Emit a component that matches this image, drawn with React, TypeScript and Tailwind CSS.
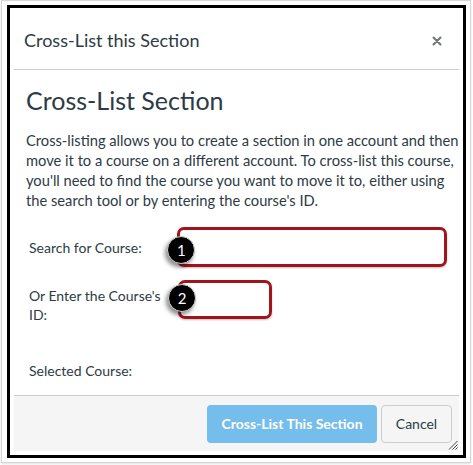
const Badge = ({ n, className }: { n: string; className: string }) => (
  <div
    className={`absolute flex h-[28px] w-[28px] items-center justify-center rounded-full border border-[#d0d0d0] bg-black text-[15px] text-white shadow-[-2px_3px_4px_rgba(0,0,0,0.45)] ${className}`}
  >
    {n}
  </div>
);

const App = () => {
  return (
    <div className="h-[465px] w-[473px] bg-white font-['Lato',sans-serif] text-[#2d3b45]">
      <div className="ml-[1px] h-[463px] w-[470px] border border-[#d6d6d6] pl-[5px] pt-[4px] shadow-[0_1px_2px_rgba(0,0,0,0.12)]">
        <div className="h-[453px] w-[459px] border-[3px] border-black p-[4px]">
          <div className="relative flex h-full flex-col bg-white">
            {/* header */}
            <div className="flex h-[58px] shrink-0 items-center justify-between border-b border-[#c7cdd1] pl-[10px] pr-[17px]">
              <span className="text-[18px]">Cross-List this Section</span>
              <svg width="10" height="10" viewBox="0 0 10 10" className="mt-[1px]">
                <path d="M1.5 1.5 L8.5 8.5 M8.5 1.5 L1.5 8.5" stroke="#6f7478" strokeWidth="2" strokeLinecap="round" />
              </svg>
            </div>

            {/* body */}
            <div className="flex-1 px-[12px] pt-[14px]">
              <h2 className="text-[25px] leading-[32px]">Cross-List Section</h2>
              <p className="mt-[14px] whitespace-nowrap text-[14.7px] leading-[20px]">
                Cross-listing allows you to create a section in one account and then
                <br />
                move it to a course on a different account. To cross-list this course,
                <br />
                you'll need to find the course you want to move it to, either using
                <br />
                the search tool or by entering the course's ID.
              </p>

              <div className="mt-[17px] flex items-center pl-[3px]">
                <div className="w-[149px] text-[14px]">Search for Course:</div>
                <div className="relative h-[40px] w-[271px] rounded-[7px] border-[3px] border-[#a0141a] shadow-[0_1px_2px_rgba(0,0,0,0.25)]">
                  <Badge n="1" className="left-[-13px] top-[6px]" />
                </div>
              </div>

              <div className="mt-[13px] flex items-start pl-[3px]">
                <div className="w-[149px] pt-[6px] text-[14px] leading-[19px]">
                  Or Enter the Course's
                  <br />
                  ID:
                </div>
                <div className="relative h-[39px] w-[94px] rounded-[7px] border-[3px] border-[#a0141a] shadow-[0_1px_2px_rgba(0,0,0,0.25)]">
                  <Badge n="2" className="left-[-13px] top-[1px]" />
                </div>
              </div>

              <div className="mt-[36px] pl-[3px] text-[14px]">Selected Course:</div>
            </div>

            {/* footer */}
            <div className="flex h-[56px] shrink-0 items-center justify-end gap-[4px] border-t border-[#c7cdd1] bg-[#f5f5f5] pr-[7px]">
              <button className="h-[38px] w-[170px] rounded-[4px] bg-[#75bdea] text-[14px] font-bold text-white">
                Cross-List This Section
              </button>
              <button className="h-[38px] w-[71px] rounded-[4px] border border-[#c7cdd1] bg-[#f5f5f5] text-[14px] text-[#2d3b45]">
                Cancel
              </button>
            </div>

            {/* resize grip */}
            <svg width="10" height="10" viewBox="0 0 10 10" className="absolute bottom-[1px] right-[1px]">
              <path d="M9.5 1 L1 9.5 M9.5 4.5 L4.5 9.5 M9.5 7.5 L7.5 9.5" stroke="#444" strokeWidth="1" />
            </svg>
          </div>
        </div>
      </div>
    </div>
  );
};

export default App;
